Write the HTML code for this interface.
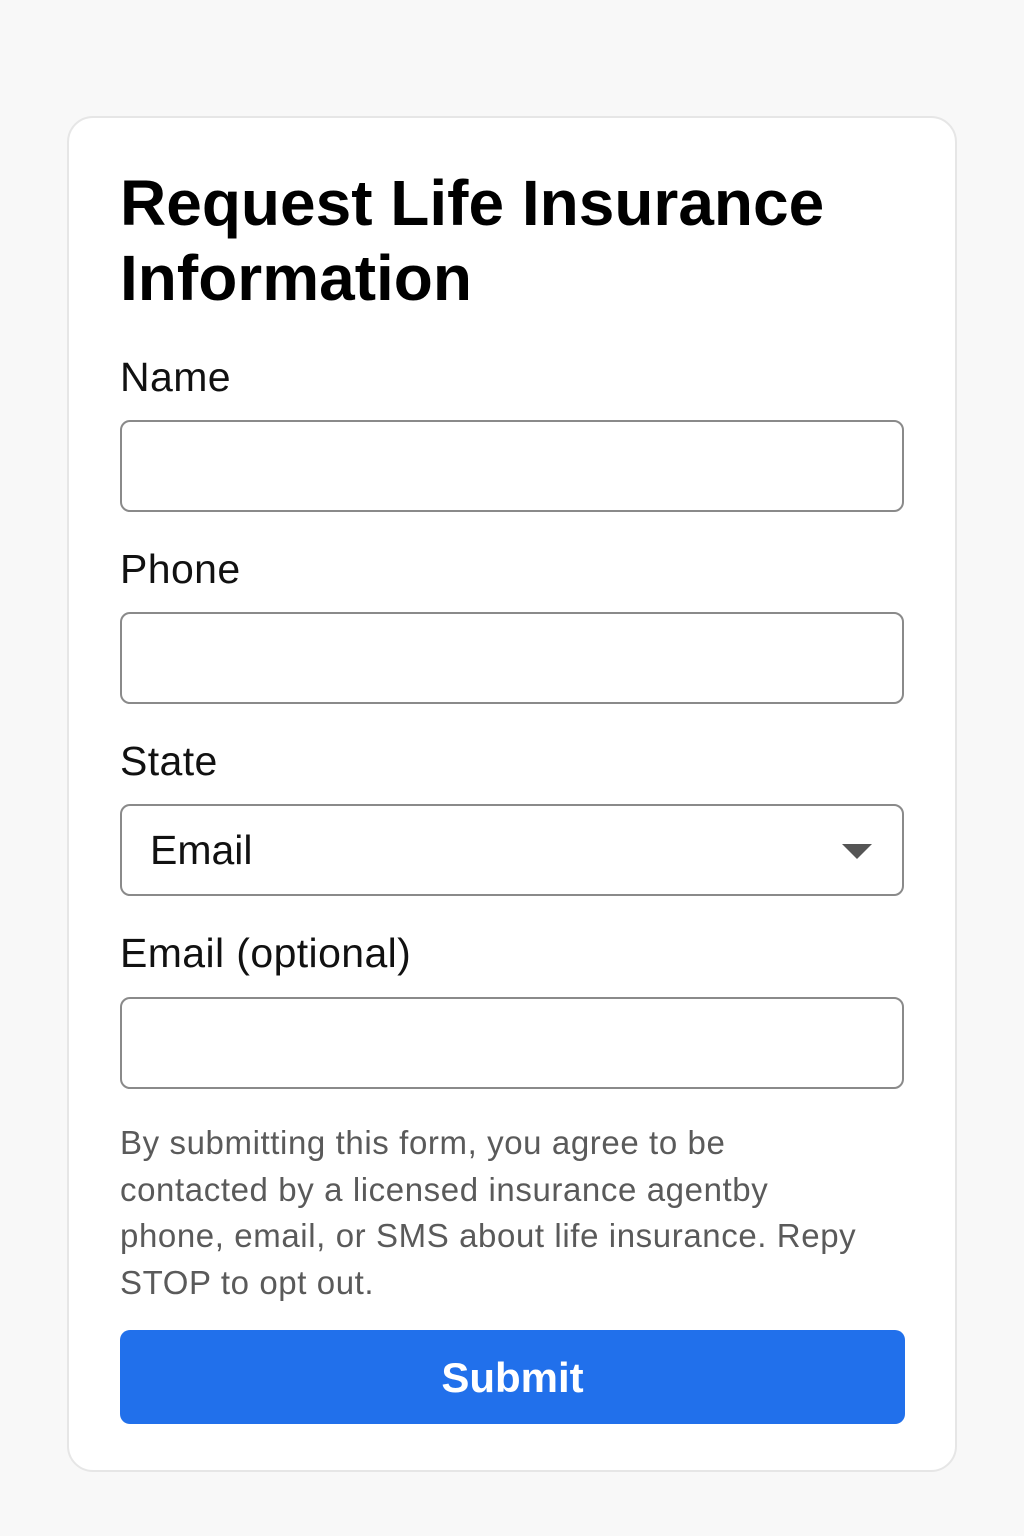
<!DOCTYPE html>
<html><head><meta charset="utf-8"><style>
html,body{margin:0;padding:0;background:#f8f8f8;width:1024px;height:1536px;overflow:hidden;font-family:"Liberation Sans",sans-serif;}
.card{position:absolute;left:67px;top:116px;width:886px;height:1352px;background:#fff;border:2px solid #e6e6e6;border-radius:26px;}
h1{position:absolute;left:120px;top:166px;margin:0;font-size:64px;line-height:75px;font-weight:700;color:#000;letter-spacing:0px;}
.lbl{position:absolute;left:120px;font-size:41px;color:#111;line-height:48px;letter-spacing:0.4px;}
.inp{position:absolute;left:120px;width:780px;height:88px;border:2px solid #8a8a8a;border-radius:10px;background:#fff;}
.sel{font-size:41px;line-height:88px;padding-left:28px;box-sizing:content-box;width:752px;color:#111;}
.arrow{position:absolute;right:30px;top:38px;width:0;height:0;border-left:15px solid transparent;border-right:15px solid transparent;border-top:15px solid #555;}
.disc{position:absolute;left:120px;top:1120px;width:800px;font-size:33px;line-height:46.5px;color:#5a5a5a;letter-spacing:0.6px;}
.btn{position:absolute;left:120px;top:1330px;width:785px;height:94px;background:#2170eb;border-radius:10px;color:#fff;font-weight:700;font-size:42px;line-height:96px;text-align:center;}
</style></head><body>
<div class="card"></div>
<h1>Request Life Insurance<br>Information</h1>
<div class="lbl" style="top:353px">Name</div>
<div class="inp" style="top:420px"></div>
<div class="lbl" style="top:545px">Phone</div>
<div class="inp" style="top:612px"></div>
<div class="lbl" style="top:737px">State</div>
<div class="inp sel" style="top:804px;">Email<div class="arrow"></div></div>
<div class="lbl" style="top:929px">Email (optional)</div>
<div class="inp" style="top:997px"></div>
<div class="disc">By submitting this form, you agree to be<br>contacted by a licensed insurance agentby<br>phone, email, or SMS about life insurance. Repy<br>STOP to opt out.</div>
<div class="btn">Submit</div>
</body></html>
